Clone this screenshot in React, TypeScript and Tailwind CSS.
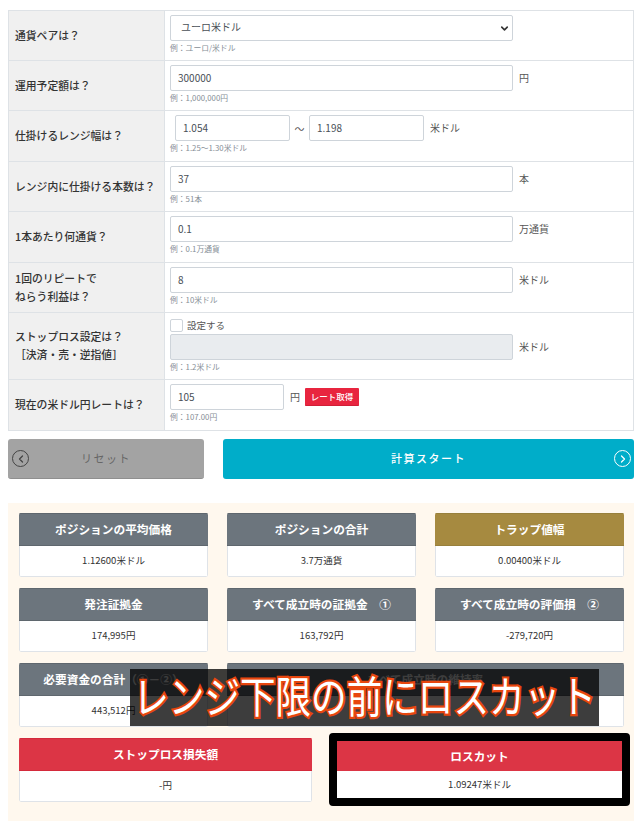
import { ReactNode } from "react"
import { ChevronLeft, ChevronRight, ChevronDown } from "lucide-react"

function Row({ label, h, children }: { label: ReactNode; h: string; children: ReactNode }) {
  return (
    <div className={`flex border-b border-[#dee2e6] ${h}`}>
      <div className="w-[156px] shrink-0 flex items-center bg-[#f0f0f0] border-r border-[#dee2e6] pl-[6px] pb-[2px] text-[10.8px] leading-[18px] font-medium text-[#333]">
        <div>{label}</div>
      </div>
      <div className="flex-1 pl-[5px] pt-[4px]">{children}</div>
    </div>
  )
}

function Input({ value, w = "w-[343px]" }: { value?: string; w?: string }) {
  return (
    <div className={`h-[26px] ${w} shrink-0 bg-white border border-[#ced4da] rounded-[2px] pl-[7px] pb-[1px] flex items-center text-[10px] text-[#495057]`}>
      {value}
    </div>
  )
}

function Hint({ children }: { children: ReactNode }) {
  return <div className="text-[7.8px] leading-[10px] mt-[2px] text-[#868e96]">{children}</div>
}

function Unit({ children }: { children: ReactNode }) {
  return <span className="ml-[6px] pb-[2px] text-[10px] text-[#555]">{children}</span>
}

function Card({ title, value, color = "bg-[#6c757d] border-[#5f676e]", cls = "w-[189px]" }: { title: string; value?: string; color?: string; cls?: string }) {
  return (
    <div className={`${cls} h-[64px] overflow-hidden rounded-[2px]`}>
      <div className={`h-[33px] pb-[2px] border-y flex items-center justify-center text-white text-[11.7px] font-bold ${color}`}>{title}</div>
      <div className="h-[31px] pb-[2px] bg-white border-x border-b border-[#dfe3e8] rounded-b-[2px] flex items-center justify-center text-[9.5px] text-[#333]">{value}</div>
    </div>
  )
}

function CircleBtn({ dark, right }: { dark?: boolean; right?: boolean }) {
  const Icon = right ? ChevronRight : ChevronLeft
  return (
    <span className={`w-[17px] h-[17px] rounded-full border-[1.5px] flex items-center justify-center ${dark ? "border-[#444] text-[#444]" : "border-white text-white"}`}>
      <Icon size={12} strokeWidth={2.5} />
    </span>
  )
}

export default function App() {
  return (
    <div className="relative w-[640px] h-[829px] overflow-hidden bg-white font-['Noto_Sans_CJK_JP','Noto_Sans',sans-serif]">
      <div className="pt-[10px] px-[8px]">
        <div className="w-[626px] border border-[#dee2e6] border-b-0">
          <Row label="通貨ペアは？" h="h-[50px]">
            <div className="h-[26px] w-[343px] bg-white border border-[#ced4da] rounded-[2px] pl-[10px] pr-[2px] pb-[3px] flex items-center justify-between text-[10px] text-[#495057]">
              <span>ユーロ米ドル</span>
              <ChevronDown size={11} strokeWidth={3.5} className="text-[#333] mt-[3px]" />
            </div>
            <Hint>例：ユーロ/米ドル</Hint>
          </Row>
          <Row label="運用予定額は？" h="h-[50px]">
            <div className="flex items-center">
              <Input value="300000" />
              <Unit>円</Unit>
            </div>
            <Hint>例：1,000,000円</Hint>
          </Row>
          <Row label="仕掛けるレンジ幅は？" h="h-[51px]">
            <div className="flex items-center pl-[5px]">
              <Input value="1.054" w="w-[115px]" />
              <span className="mx-[4.5px] text-[10px] text-[#555]">～</span>
              <Input value="1.198" w="w-[115px]" />
              <Unit>米ドル</Unit>
            </div>
            <Hint>例：1.25～1.30米ドル</Hint>
          </Row>
          <Row label="レンジ内に仕掛ける本数は？" h="h-[50px]">
            <div className="flex items-center">
              <Input value="37" />
              <Unit>本</Unit>
            </div>
            <Hint>例：51本</Hint>
          </Row>
          <Row label="1本あたり何通貨？" h="h-[51px]">
            <div className="flex items-center">
              <Input value="0.1" />
              <Unit>万通貨</Unit>
            </div>
            <Hint>例：0.1万通貨</Hint>
          </Row>
          <Row label={<>1回のリピートで<br />ねらう利益は？</>} h="h-[50px]">
            <div className="flex items-center">
              <Input value="8" />
              <Unit>米ドル</Unit>
            </div>
            <Hint>例：10米ドル</Hint>
          </Row>
          <Row label={<>ストップロス設定は？<br />［決済・売・逆指値］</>} h="h-[67px]">
            <div className="flex items-center h-[14px] mb-[2px] mt-[1px]">
              <span className="w-[13px] h-[13px] border border-[#ced4da] rounded-[2px] bg-white" />
              <span className="ml-[4px] text-[9.5px] text-[#555]">設定する</span>
            </div>
            <div className="flex items-center">
              <div className="h-[26px] w-[343px] bg-[#e9ecef] border border-[#ced4da] rounded-[2px]" />
              <Unit>米ドル</Unit>
            </div>
            <Hint>例：1.2米ドル</Hint>
          </Row>
          <Row label="現在の米ドル円レートは？" h="h-[51px]">
            <div className="flex items-center">
              <Input value="105" w="w-[114px]" />
              <Unit>円</Unit>
              <span className="ml-[5px] w-[54px] h-[18px] bg-[#e8253f] rounded-[1px] border-b border-[#d11f37] text-white text-[8.5px] font-medium flex items-center justify-center">レート取得</span>
            </div>
            <Hint>例：107.00円</Hint>
          </Row>
        </div>
      </div>

      <div className="flex mt-[8px] ml-[8px] gap-[19px]">
        <div className="relative w-[196px] h-[40px] pb-[1px] rounded-[3px] bg-[#a3a3a3] border-b border-[#8f8f8f] flex items-center justify-center text-[11px] tracking-[1.5px] text-[#666]">
          <span className="absolute left-[4px] top-[11px]"><CircleBtn dark /></span>
          リセット
        </div>
        <div className="relative w-[411px] h-[40px] pb-[1px] rounded-[3px] bg-[#00adc9] flex items-center justify-center text-[11px] font-medium tracking-[1.5px] text-white">
          計算スタート
          <span className="absolute right-[3px] top-[11px]"><CircleBtn right /></span>
        </div>
      </div>

      <div className="ml-[8px] mt-[24px] w-[626px] h-[318px] bg-[#fff8ee] pl-[11px] pt-[10px]">
        <div className="flex gap-[19px]">
          <Card title="ポジションの平均価格" value="1.12600米ドル" />
          <Card title="ポジションの合計" value="3.7万通貨" />
          <Card title="トラップ値幅" value="0.00400米ドル" color="bg-[#a68a40] border-[#98803c]" />
        </div>
        <div className="flex gap-[19px] mt-[11px]">
          <Card title="発注証拠金" value="174,995円" />
          <Card title="すべて成立時の証拠金　①" value="163,792円" />
          <Card title="すべて成立時の評価損　②" value="-279,720円" />
        </div>
        <div className="flex gap-[19px] mt-[11px]">
          <Card title="必要資金の合計（①－②）" value="443,512円" />
          <Card title="すべて成立時の維持率" value="" cls="w-[397px]" />
        </div>
        <div className="flex mt-[11px]">
          <Card title="ストップロス損失額" value="-円" color="bg-[#dc3545] border-[#d42a3b]" cls="w-[293px]" />
          <div className="ml-[17px] -mt-[5px] w-[301px] h-[73px] border-[8px] border-black rounded-[4px] bg-white">
            <div className="h-[30px] pb-[1px] bg-[#dc3545] flex items-center justify-center text-white text-[11.7px] font-bold">ロスカット</div>
            <div className="h-[27px] flex items-center justify-center text-[9.5px] text-[#333]">1.09247米ドル</div>
          </div>
        </div>
      </div>

      <div className="absolute left-[130px] top-[669px] w-[469px] h-[57px] pb-[5px] bg-black/[.76] flex items-center justify-center">
        <span className="text-[35.6px] leading-none font-normal text-white whitespace-nowrap scale-y-[1.22] [-webkit-text-stroke:3.6px_#e8460e] [paint-order:stroke_fill]">
          レンジ下限の前にロスカット
        </span>
      </div>
    </div>
  )
}
